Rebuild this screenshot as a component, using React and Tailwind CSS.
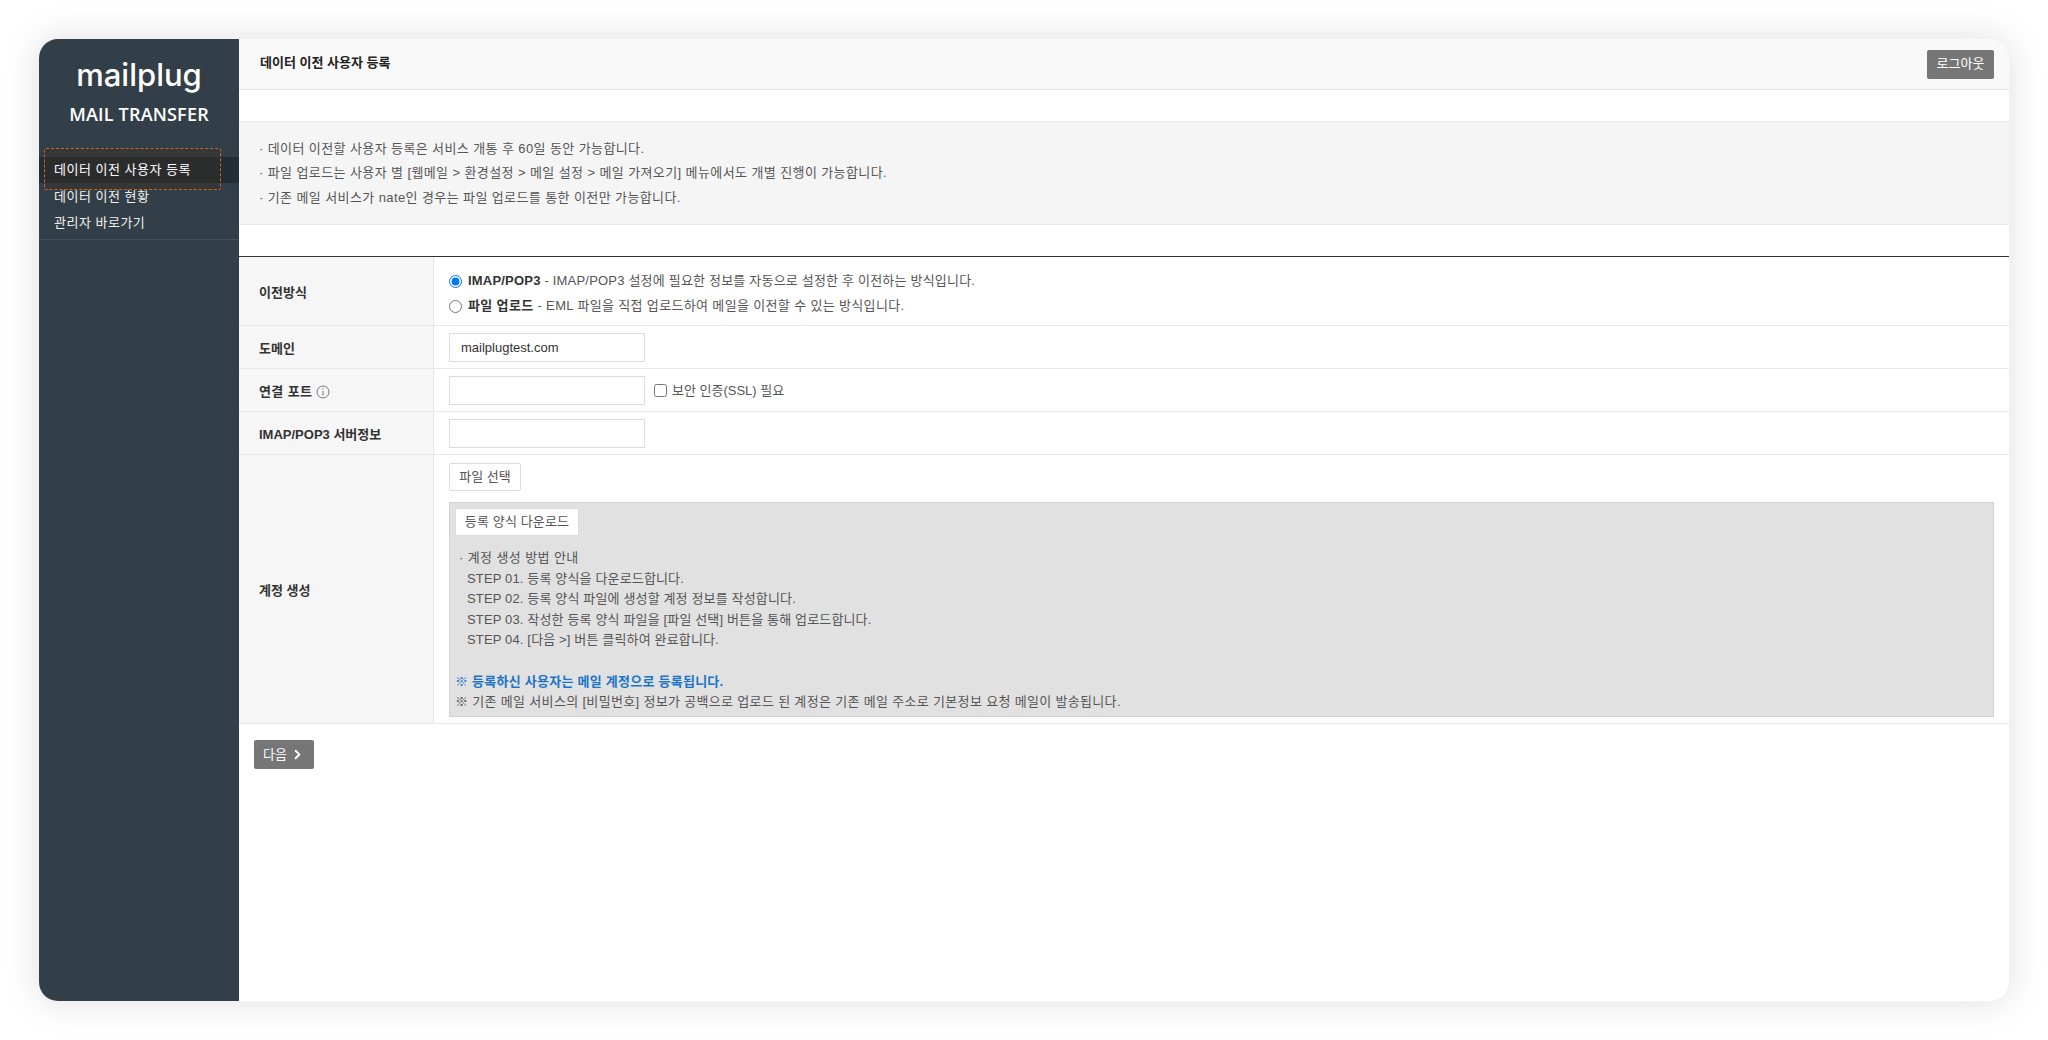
import { ChevronRight } from 'lucide-react'

const krFont = "font-['Liberation_Sans','Noto_Sans_CJK_KR',sans-serif]"

// Row of the form table: grey label on the left, content on the right
function FormRow({ label, height, children }) {
    return (
        <div className={`flex border-b border-[#e8e8e8] ${height}`}>
            <div className="w-[195px] shrink-0 flex items-center pl-[20px] pt-[4px] bg-[#f6f6f6] border-r border-[#e8e8e8] text-[13px] font-semibold text-[#333]">
                {label}
            </div>
            <div className="flex-1 min-w-0 pl-[15px] pr-[15px]">{children}</div>
        </div>
    )
}

function TextBox({ value }) {
    return (
        <input
            type="text"
            defaultValue={value}
            className="w-[196px] h-[29px] px-[11px] pt-[1px] bg-white border border-[#ddd] text-[13px] text-[#333] outline-none"
        />
    )
}

function App() {
    return (
        <div className={`w-full h-[1040px] bg-white p-[38px] ${krFont}`}>
            <div className="flex h-full rounded-[20px] overflow-hidden bg-white border border-[#f2f2f2] shadow-[0_0_36px_rgba(0,0,0,0.13)]">

                {/* Sidebar */}
                <aside className="w-[200px] shrink-0 bg-[#333f48] text-white">
                    <div className="h-[118px] flex flex-col items-center pt-[15px]">
                        <div className="font-['Inter',sans-serif] text-[31px] leading-[42px] font-medium">mailplug</div>
                        <div className="font-['Open_Sans',sans-serif] text-[18px] leading-[24px] mt-[6px] font-semibold tracking-[0.2px]">MAIL TRANSFER</div>
                    </div>
                    <nav className="relative border-b border-[#45515a] pb-[3px] text-[13px] text-[#f0f0e8] tracking-[0.5px]">
                        {/* Dashed highlight behind the active item */}
                        <div className="absolute left-[5px] top-[-9px] w-[177px] h-[42px] border border-dashed border-[#c8662a] bg-[#3a2c22]/40 rounded-[2px]"></div>
                        <div className="h-[26px] flex items-center pl-[15px] bg-[#222d35]">
                            <span className="relative text-white">데이터 이전 사용자 등록</span>
                        </div>
                        <div className="h-[27px] flex items-center pl-[15px]">데이터 이전 현황</div>
                        <div className="h-[26px] flex items-center pl-[15px]">관리자 바로가기</div>
                    </nav>
                </aside>

                {/* Main Content */}
                <main className="flex-1 min-w-0 text-[13px] text-[#555]">

                    {/* Header */}
                    <header className="h-[51px] flex items-center justify-between pl-[21px] pr-[15px] bg-[#f9f9f9] border-b border-[#e8e8e8]">
                        <h1 className="mb-[3px] text-[13px] font-semibold text-[#222]">데이터 이전 사용자 등록</h1>
                        <button className="w-[67px] h-[29px] bg-[#767676] rounded-[2px] text-[13px] text-white">로그아웃</button>
                    </header>

                    {/* Notice */}
                    <div className="mt-[31px] h-[104px] flex flex-col justify-center pl-[20px] pt-[1px] bg-[#f5f5f5] border-y border-[#e8e8e8] leading-[24.5px] tracking-[0.4px]">
                        <p>· 데이터 이전할 사용자 등록은 서비스 개통 후 60일 동안 가능합니다.</p>
                        <p>· 파일 업로드는 사용자 별 [웹메일 &gt; 환경설정 &gt; 메일 설정 &gt; 메일 가져오기] 메뉴에서도 개별 진행이 가능합니다.</p>
                        <p>· 기존 메일 서비스가 nate인 경우는 파일 업로드를 통한 이전만 가능합니다.</p>
                    </div>

                    {/* Form */}
                    <div className="mt-[31px] border-t border-[#333]">
                        <FormRow label="이전방식" height="h-[69px]">
                            <div className="h-full flex flex-col justify-center gap-[6px] pt-[5px]">
                                <label className="flex items-center h-[19px] gap-[6px] tracking-[0.2px]">
                                    <input type="radio" name="method" defaultChecked className="w-[13px] h-[13px] m-0" />
                                    <span><b className="font-semibold text-[#333]">IMAP/POP3</b> - IMAP/POP3 설정에 필요한 정보를 자동으로 설정한 후 이전하는 방식입니다.</span>
                                </label>
                                <label className="flex items-center h-[19px] gap-[6px] tracking-[0.35px]">
                                    <input type="radio" name="method" className="w-[13px] h-[13px] m-0" />
                                    <span><b className="font-semibold text-[#333]">파일 업로드</b> - EML 파일을 직접 업로드하여 메일을 이전할 수 있는 방식입니다.</span>
                                </label>
                            </div>
                        </FormRow>
                        <FormRow label="도메인" height="h-[43px]">
                            <div className="h-full flex items-center"><TextBox value="mailplugtest.com" /></div>
                        </FormRow>
                        <FormRow
                            label={
                                <span className="flex items-center gap-[4px] tracking-[0.4px]">
                                    연결 포트
                                    <svg width="14" height="14" viewBox="0 0 14 14" fill="none" stroke="#777" strokeWidth="1">
                                        <circle cx="7" cy="7" r="6" />
                                        <path d="M7 6v4.5M7 3.5v1.2" />
                                    </svg>
                                </span>
                            }
                            height="h-[43px]"
                        >
                            <div className="h-full flex items-center gap-[9px]">
                                <TextBox />
                                <label className="flex items-center gap-[5px] pt-[1px]">
                                    <input type="checkbox" className="w-[13px] h-[13px] m-0" />
                                    보안 인증(SSL) 필요
                                </label>
                            </div>
                        </FormRow>
                        <FormRow label="IMAP/POP3 서버정보" height="h-[43px]">
                            <div className="h-full flex items-center"><TextBox /></div>
                        </FormRow>
                        <FormRow label="계정 생성" height="h-[269px]">
                            <div className="pt-[8px]">
                                <button className="block w-[72px] h-[28px] bg-white border border-[#ddd] rounded-[2px] text-[13px] text-[#555]">파일 선택</button>
                                <div className="mt-[11px] h-[215px] px-[5px] pt-[5px] bg-[#e1e1e1] border border-[#d2d2d2] leading-[20.6px] tracking-[0.15px]">
                                    <button className="block w-[124px] h-[28px] bg-white border border-[#ddd] text-[13px] text-[#555]">등록 양식 다운로드</button>
                                    <div className="mt-[12px] pl-[4px] tracking-[0.4px]">· 계정 생성 방법 안내</div>
                                    <div className="pl-[12px]">STEP 01. 등록 양식을 다운로드합니다.</div>
                                    <div className="pl-[12px]">STEP 02. 등록 양식 파일에 생성할 계정 정보를 작성합니다.</div>
                                    <div className="pl-[12px]">STEP 03. 작성한 등록 양식 파일을 [파일 선택] 버튼을 통해 업로드합니다.</div>
                                    <div className="pl-[12px]">STEP 04. [다음 &gt;] 버튼 클릭하여 완료합니다.</div>
                                    <div className="mt-[20.6px] font-semibold text-[#1b74c8] tracking-[0.25px]">※ 등록하신 사용자는 메일 계정으로 등록됩니다.</div>
                                    <div className="tracking-[0.33px]">※ 기존 메일 서비스의 [비밀번호] 정보가 공백으로 업로드 된 계정은 기존 메일 주소로 기본정보 요청 메일이 발송됩니다.</div>
                                </div>
                            </div>
                        </FormRow>
                    </div>

                    {/* Next */}
                    <button className="mt-[16px] ml-[15px] w-[60px] h-[29px] flex items-center justify-center gap-[3px] bg-[#767676] rounded-[2px] text-[13px] text-white">
                        다음
                        <ChevronRight size={15} strokeWidth={3} />
                    </button>
                </main>
            </div>
        </div>
    )
}

export default App
